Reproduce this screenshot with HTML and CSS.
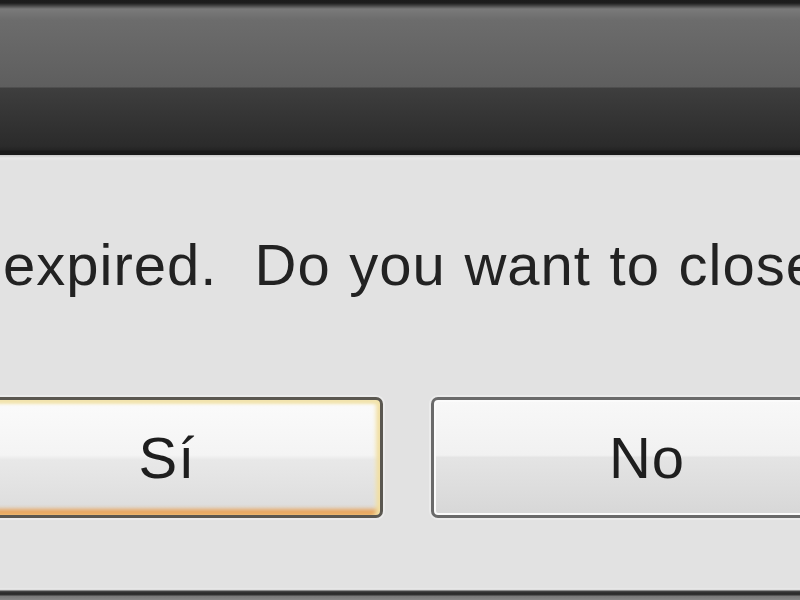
FILE: index.html
```html
<!DOCTYPE html>
<html lang="en">
<head>
<meta charset="utf-8">
<title>Dialog</title>
<link rel="stylesheet" href="styles.css">
</head>
<body>
<div class="window">
  <div class="titlebar"></div>
  <div class="panel">
    <p class="message">expired.  Do you want to close the session?</p>
    <div class="buttons">
      <button class="btn btn-default">Sí</button>
      <button class="btn">No</button>
    </div>
  </div>
  <div class="bottom-edge"></div>
</div>
</body>
</html>
```
FILE: styles.css
```css
html, body {
  margin: 0;
  padding: 0;
  width: 800px;
  height: 600px;
  overflow: hidden;
  background: #e2e2e2;
}

.window {
  display: flex;
  flex-direction: column;
  width: 800px;
  height: 600px;
  overflow: hidden;
}

.titlebar {
  height: 155px;
  flex: none;
  background: linear-gradient(to bottom,
    #1c1c1c 0px, #1e1e1e 3px, #3a3a3a 5px, #7a7a7a 9px,
    #6c6c6c 20px, #5e5e5e 87px, #3e3e3e 88px,
    #2b2b2b 146px, #242424 150px, #1a1a1a 151px, #1a1a1a 155px);
}

.panel {
  flex: 1;
  overflow: hidden;
  background: linear-gradient(to bottom, #c8c8c8 0px, #e8e8e8 3px, #e2e2e2 6px, #e2e2e2 100%);
  padding-top: 75px;
}

.message {
  margin: 0;
  padding-left: 3px;
  font-family: "Liberation Sans", Arial, sans-serif;
  font-size: 58px;
  line-height: 70px;
  letter-spacing: 1px;
  word-spacing: 1.5px;
  color: #222222;
  white-space: pre;
}

.buttons {
  display: flex;
  gap: 48px;
  margin-top: 97px;
  margin-left: -49px;
}

.btn {
  flex: none;
  width: 432px;
  height: 121px;
  box-sizing: border-box;
  border: 3px solid #6a6a6a;
  border-radius: 7px;
  font-family: "Liberation Sans", Arial, sans-serif;
  font-size: 58px;
  letter-spacing: 1px;
  color: #1e1e1e;
  padding: 0;
  background: linear-gradient(to bottom, #f8f8f8 0%, #f1f1f1 48%, #e4e4e4 50%, #d7d7d7 100%);
  box-shadow: inset 0 0 0 2px #fbfbfb, 0 0 0 2px #ebebeb;
}

.btn-default {
  border-color: #5a5750;
  background: linear-gradient(to bottom, #fbfbfb 0%, #f4f4f4 48%, #e8e8e8 52%, #dcdcdc 100%);
  box-shadow:
    inset 0 5px 3px -1px #f2e4ae,
    inset -5px 0 4px -1px #f2e1a6,
    inset 0 -7px 4px -1px #e8a45a,
    0 0 0 2px #ebebeb;
}

.bottom-edge {
  height: 12px;
  flex: none;
  background: linear-gradient(to bottom,
    #e2e2e2 0px, #ececec 1px, #d0d0d0 2px, #4a4a4a 3px,
    #2a2a2a 5px, #333333 7px, #777777 8px, #888888 12px);
}
```
